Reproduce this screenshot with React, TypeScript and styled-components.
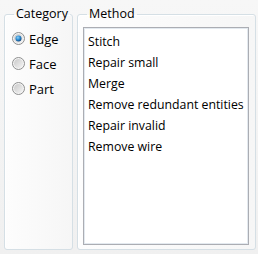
import styled, { createGlobalStyle } from 'styled-components';

const GlobalStyle = createGlobalStyle`
  html, body {
    margin: 0;
    padding: 0;
    background: #f0f0f0;
  }
  body {
    font-family: "Open Sans", "Noto Sans", sans-serif;
    font-size: 12.3px;
    color: #000;
  }
`;

const Window = styled.div`
  width: 258px;
  height: 254px;
  box-sizing: border-box;
  padding: 7px 2px 4px 4px;
  display: flex;
  gap: 4px;
  background: linear-gradient(to bottom, #f7f7f7, #f0f0f0);
`;

const Group = styled.fieldset<{ width: number }>`
  width: ${p => p.width}px;
  min-width: 0;
  box-sizing: border-box;
  margin: 0;
  padding: 0 5px 4px 5px;
  border: 1px solid #d5dfe5;
  border-radius: 3px;
  background: linear-gradient(to right, #fdfdfd, #f6f6f6);
  box-shadow: inset 1px 1px 0 #ffffff;
  display: flex;
  flex-direction: column;
`;

const Legend = styled.legend`
  padding: 0 2px;
  margin-left: 4px;
  line-height: 14px;
  font-size: 12.5px;
  color: #000;
`;

const RadioList = styled.div`
  display: flex;
  flex-direction: column;
  gap: 8px;
  padding-top: 9px;
  padding-left: 2px;
`;

const RadioRow = styled.label`
  display: flex;
  align-items: center;
  gap: 4px;
  height: 17px;
`;

const RadioLabel = styled.span`
  font-size: 13px;
`;

const ListBox = styled.div`
  flex: 1;
  margin-top: 6px;
  margin-right: 1px;
  border: 1px solid #abadb3;
  box-shadow: inset 0 0 0 1px #e3e9ef;
  background: #fff;
  padding: 3px 4px 1px;
  display: flex;
  flex-direction: column;
`;

const ListItem = styled.div`
  height: 21px;
  line-height: 21px;
  white-space: nowrap;
`;

function Radio({ checked }: { checked?: boolean }) {
  return (
    <svg width="13" height="13" viewBox="0 0 13 13">
      <defs>
        <linearGradient id="rg" x1="0" y1="0" x2="1" y2="1">
          <stop offset="0" stopColor="#c9c9c9" />
          <stop offset="1" stopColor="#f4f4f4" />
        </linearGradient>
        <radialGradient id="dot" cx="0.4" cy="0.35" r="0.7">
          <stop offset="0" stopColor="#8fd0f5" />
          <stop offset="0.5" stopColor="#2f8fd4" />
          <stop offset="1" stopColor="#0b3f78" />
        </radialGradient>
      </defs>
      <circle cx="6.5" cy="6.5" r="6" fill="#f4f4f4" stroke="#8e8f8f" strokeWidth="1" />
      <circle cx="6.5" cy="6.5" r="4.5" fill="url(#rg)" />
      {checked && <circle cx="6.5" cy="6.5" r="3" fill="url(#dot)" />}
    </svg>
  );
}

const categories = ['Edge', 'Face', 'Part'];
const methods = [
  'Stitch',
  'Repair small',
  'Merge',
  'Remove redundant entities',
  'Repair invalid',
  'Remove wire',
];

export default function App() {
  return (
    <>
      <GlobalStyle />
      <Window>
        <Group width={69}>
          <Legend>Category</Legend>
          <RadioList>
            {categories.map((c, i) => (
              <RadioRow key={c}>
                <Radio checked={i === 0} />
                <RadioLabel>{c}</RadioLabel>
              </RadioRow>
            ))}
          </RadioList>
        </Group>
        <Group width={179}>
          <Legend>Method</Legend>
          <ListBox>
            {methods.map(m => (
              <ListItem key={m}>{m}</ListItem>
            ))}
          </ListBox>
        </Group>
      </Window>
    </>
  );
}
